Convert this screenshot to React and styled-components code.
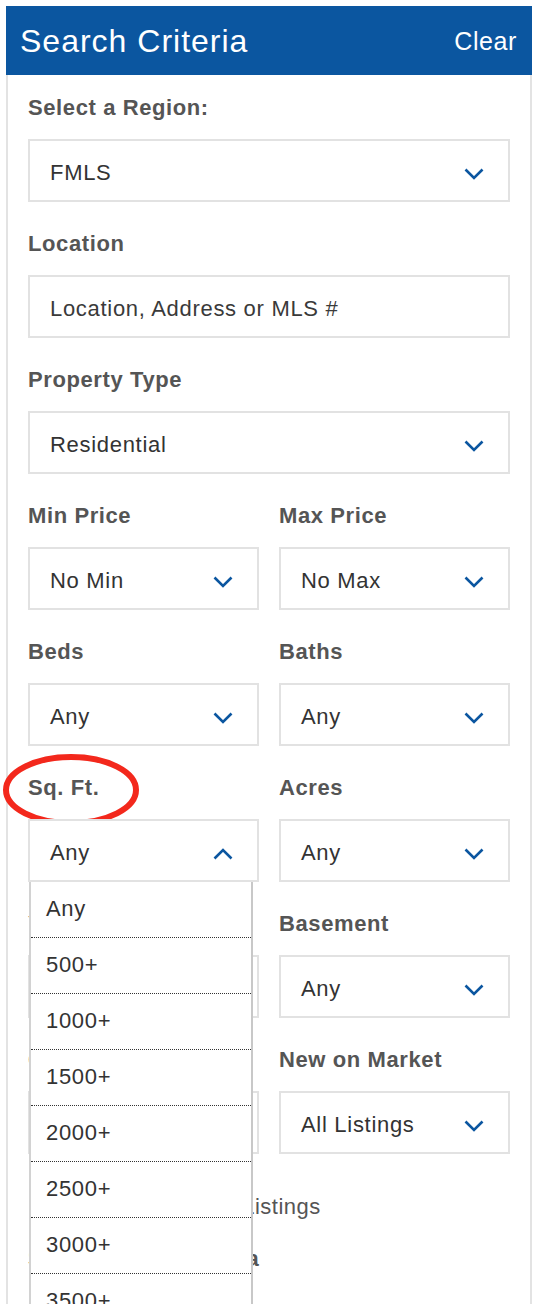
import React from "react";
import styled, { createGlobalStyle } from "styled-components";

const Global = createGlobalStyle`
  html, body { margin: 0; padding: 0; background: #fff; }
  body {
    padding: 6px 6px 0 6px;
    font-family: "Liberation Sans", Arial, Helvetica, sans-serif;
    overflow: hidden;
  }
`;

const Wrap = styled.div`
  width: 526px;
  display: flex;
  flex-direction: column;
  min-height: 1298px;
`;

const Header = styled.div`
  height: 69px;
  background: #0b56a0;
  display: flex;
  align-items: center;
  justify-content: space-between;
  padding: 2px 15px 0 14px;
  box-sizing: border-box;
  color: #fff;
`;

const Title = styled.h1`
  margin: 0;
  font-weight: 400;
  font-size: 32px;
  letter-spacing: 1px;
`;

const ClearLink = styled.span`
  font-size: 25px;
  letter-spacing: 0.6px;
`;

const Body = styled.div`
  flex: 1;
  border-left: 2px solid #e3e3e3;
  border-right: 2px solid #e3e3e3;
  padding: 20px 20px 0 20px;
`;

const Field = styled.div`
  position: relative;
  margin-bottom: 29px;
`;

const Row = styled.div`
  display: grid;
  grid-template-columns: 1fr 1fr;
  column-gap: 20px;
`;

const Label = styled.div`
  position: relative;
  font-size: 22px;
  line-height: 26px;
  font-weight: 700;
  letter-spacing: 0.6px;
  color: #555;
  margin-bottom: 18px;
`;

const Box = styled.div`
  position: relative;
  box-sizing: border-box;
  height: 63px;
  border: 2px solid #e2e2e2;
  background: #fff;
  display: flex;
  align-items: center;
  justify-content: space-between;
  padding: 4px 24px 0 20px;
  font-size: 22px;
  letter-spacing: 0.7px;
  color: ${(p) => (p.$placeholder ? "#3a3a3a" : "#333")};
`;

const Chevron = styled.svg`
  width: 20px;
  height: 12px;
  flex: none;
  margin-top: 2px;
`;

const Menu = styled.ul`
  position: absolute;
  top: 100%;
  left: 1px;
  width: 224px;
  box-sizing: border-box;
  margin: 0;
  padding: 0;
  list-style: none;
  background: #fff;
  border-left: 2px solid #d2d2d2;
  border-right: 2px solid #c8c8c8;
  z-index: 10;
`;

const MenuItem = styled.li`
  box-sizing: border-box;
  height: 56px;
  display: flex;
  align-items: center;
  padding: 0 0 1px 15px;
  border-bottom: 1px dotted #333;
  font-size: 22px;
  letter-spacing: 0.7px;
  color: #333;
`;

const Ring = styled.svg`
  position: absolute;
  left: -27px;
  top: -23px;
  width: 140px;
  height: 76px;
  pointer-events: none;
  overflow: visible;
`;

const CheckRow = styled.label`
  display: flex;
  align-items: center;
  gap: 13px;
  margin-top: 11px;
  margin-bottom: 26px;
  font-size: 22px;
  line-height: 26px;
  letter-spacing: 0.5px;
  color: #555;
`;

const CheckBox = styled.span`
  width: 20px;
  height: 20px;
  border: 2px solid #bbb;
  box-sizing: border-box;
  margin-left: 2px;
`;

const Down = ({ up }) => (
  <Chevron viewBox="0 0 20 12">
    <path
      d={up ? "M1.5 10.5 L10 2 L18.5 10.5" : "M1.5 1.5 L10 10 L18.5 1.5"}
      fill="none"
      stroke="#0b56a0"
      strokeWidth="2.6"
    />
  </Chevron>
);

const SelectField = ({ label, value, ring, open, options }) => (
  <Field>
    <Label>
      {label}
      {ring && (
        <Ring viewBox="0 0 140 76">
          <ellipse cx="70" cy="38" rx="65" ry="33" fill="none" stroke="#f3281c" strokeWidth="6" />
        </Ring>
      )}
    </Label>
    <Box>
      <span>{value}</span>
      <Down up={open} />
    </Box>
    {open && (
      <Menu>
        {options.map((o) => (
          <MenuItem key={o}>{o}</MenuItem>
        ))}
      </Menu>
    )}
  </Field>
);

const sqft = ["Any", "500+", "1000+", "1500+", "2000+", "2500+", "3000+", "3500+", "4000+"];

export default function App() {
  return (
    <>
      <Global />
      <Wrap>
        <Header>
          <Title>Search Criteria</Title>
          <ClearLink>Clear</ClearLink>
        </Header>
        <Body>
          <SelectField label="Select a Region:" value="FMLS" />
          <Field>
            <Label>Location</Label>
            <Box $placeholder>
              <span>Location, Address or MLS #</span>
            </Box>
          </Field>
          <SelectField label="Property Type" value="Residential" />
          <Row>
            <SelectField label="Min Price" value="No Min" />
            <SelectField label="Max Price" value="No Max" />
          </Row>
          <Row>
            <SelectField label="Beds" value="Any" />
            <SelectField label="Baths" value="Any" />
          </Row>
          <Row>
            <SelectField label="Sq. Ft." value="Any" ring open options={sqft} />
            <SelectField label="Acres" value="Any" />
          </Row>
          <Row>
            <SelectField label="Year Built" value="Any" />
            <SelectField label="Basement" value="Any" />
          </Row>
          <Row>
            <SelectField label="Garage" value="Any" />
            <SelectField label="New on Market" value="All Listings" />
          </Row>
          <CheckRow>
            <CheckBox />
            Exclude Pending Listings
          </CheckRow>
          <Label>Subdivisions or Area</Label>
        </Body>
      </Wrap>
    </>
  );
}
